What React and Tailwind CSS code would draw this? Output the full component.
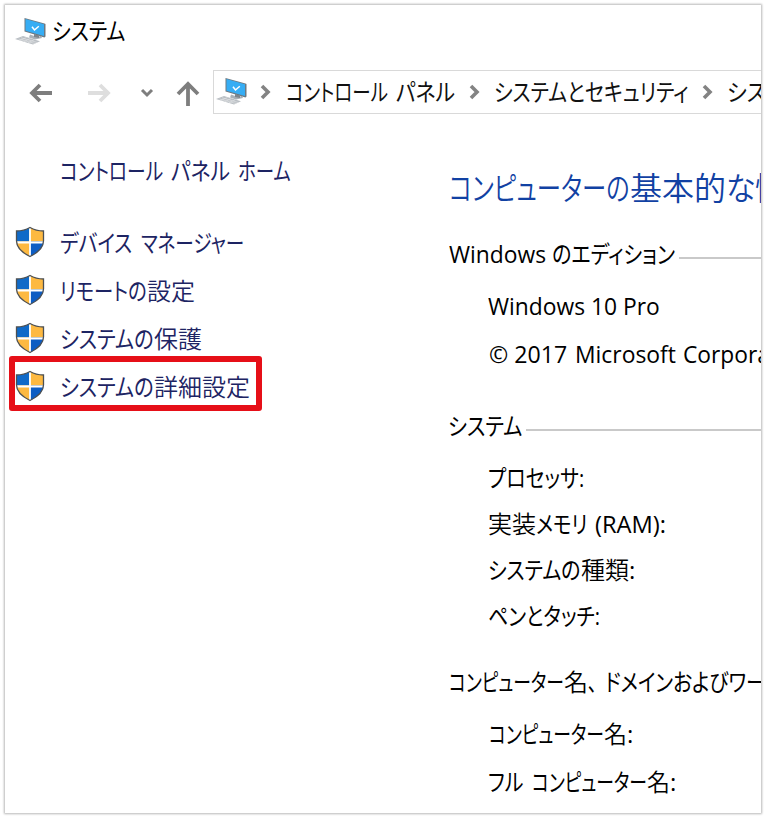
import { useLayoutEffect, useRef } from "react";

// A run of text squeezed or stretched to the width of its box
function Run({ className = "", children }) {
  const box = useRef(null);
  const text = useRef(null);

  useLayoutEffect(() => {
    const scale = box.current.offsetWidth / text.current.offsetWidth;
    text.current.style.transform = `scaleX(${scale})`;
  }, []);

  return (
    <span ref={box} className={`flex-none whitespace-nowrap ${className}`}>
      <span ref={text} className="inline-block origin-left">{children}</span>
    </span>
  );
}

function ComputerIcon() {
  return (
    <svg className="w-[31px] h-[28px] flex-none" viewBox="0 0 31 28">
      <path d="M15 17.5 L22 20 L26 19 L27 21 L20 22.5 L14 20.5 Z" fill="#a9b1b8" />
      <path d="M19 17 L24 18.5 V21 L19 20 Z" fill="#7d858c" />
      <path d="M9.5 1 L29.5 6.5 L30.5 7 V19.5 L29.5 20.5 L9.5 14.5 Z" fill="#6d7880" />
      <path d="M10.5 2 L29 7.2 V19 L10.5 13.7 Z" fill="#36adf4" />
      <path d="M17 9.7 L19.5 13 L23.8 9.3" fill="none" stroke="#fff" strokeWidth="1.5" />
      <path d="M0 22 L8 19 L25 24.3 L18 27.5 Z" fill="#b9bec3" />
      <path d="M3.5 22 L20 26.5 M6 20.8 L22 25.4 M5 23.5 L11.5 20.5 M9 24.7 L15 21.6 M13 25.8 L19 22.8" stroke="#e6e8ea" strokeWidth="0.6" />
    </svg>
  );
}

function Shield() {
  return (
    <svg className="w-[30px] h-[32px] flex-none" viewBox="0 0 30 32">
      <defs>
        <clipPath id="shield">
          <path d="M15 1.5 Q21 5 28.5 5 V15 C28.5 22.5 22 27 15 30.5 C8 27 1.5 22.5 1.5 15 V5 Q9 5 15 1.5 Z" />
        </clipPath>
      </defs>
      <g clipPath="url(#shield)">
        <path d="M0 0 H14.5 V15.5 H0 Z" fill="#106ac8" />
        <path d="M14.5 0 H30 V15.5 H14.5 Z" fill="#fdb941" />
        <path d="M0 15.5 H14.5 V32 H0 Z" fill="#fdb941" />
        <path d="M14.5 15.5 H30 V32 H14.5 Z" fill="#0d5dc3" />
        <path d="M15 0 V32 M0 16.5 H30" stroke="#fff" strokeWidth="1.8" />
      </g>
      <path d="M15 1.5 Q21 5 28.5 5 V15 C28.5 22.5 22 27 15 30.5 C8 27 1.5 22.5 1.5 15 V5 Q9 5 15 1.5 Z" fill="none" stroke="#4d5052" strokeWidth="1.3" />
    </svg>
  );
}

function Crumb() {
  return (
    <svg className="w-[11px] h-[16px] flex-none" viewBox="0 0 11 16" fill="none" stroke="#838383" strokeWidth="3.6">
      <path d="M2 2 L8 8 L2 14" />
    </svg>
  );
}

function TaskLink({ className = "", children }) {
  return (
    <a className={`flex h-12 items-center ${className}`}>
      <Shield />
      <span className="ml-[15px] flex pt-px">{children}</span>
    </a>
  );
}

export default function App() {
  return (
    <div className="h-[818px] w-[766px] overflow-hidden bg-white pt-[5px] pl-[5px] font-['Open_Sans','Noto_Sans_CJK_JP',sans-serif] text-[24px] leading-[32px] text-black [font-feature-settings:'palt']">
      <div className="h-[808px] w-[756px] overflow-hidden bg-white shadow-[0_0_2px_1px_rgba(0,0,0,0.28)]">
        {/* Title bar */}
        <div className="flex h-[51px] items-center pl-[10px]">
          <ComputerIcon />
          <Run className="ml-[6px] w-[73px]">システム</Run>
        </div>

        {/* Navigation */}
        <div className="mt-[14px] flex h-[44px] items-center">
          <svg className="ml-[23px] w-[26px] h-[24px] flex-none" viewBox="0 0 26 24" fill="none" stroke="#7e7e7e" strokeWidth="3.8">
            <path d="M24 13 H4 M12 5 L4 13 L12 21" />
          </svg>
          <svg className="ml-[32px] w-[26px] h-[24px] flex-none" viewBox="0 0 26 24" fill="none" stroke="#dedede" strokeWidth="3.8">
            <path d="M2 13 H22 M14 5 L22 13 L14 21" />
          </svg>
          <svg className="ml-[28px] w-[14px] h-[12px] flex-none" viewBox="0 0 14 12" fill="none" stroke="#7e7e7e" strokeWidth="3">
            <path d="M2 4 L7 9 L12 4" />
          </svg>
          <svg className="ml-[22px] w-[26px] h-[28px] flex-none" viewBox="0 0 26 28" fill="none" stroke="#7e7e7e" strokeWidth="3.8">
            <path d="M12 28 V6 M2 16 L12 6 L22 16" />
          </svg>
          <div className="ml-[11px] flex h-[44px] w-[600px] flex-none items-center border border-[#d9d9d9] pl-[3px] text-[#111]">
            <span className="-mt-[2px] -ml-px flex">
              <ComputerIcon />
            </span>
            <span className="w-[13px] flex-none" />
            <Crumb />
            <Run className="ml-[15px] w-[102px]">コントロール</Run>
            <Run className="ml-[8px] w-[59px]">パネル</Run>
            <span className="w-[14px] flex-none" />
            <Crumb />
            <Run className="ml-[14px] w-[195px]">システムとセキュリティ</Run>
            <span className="w-[13px] flex-none" />
            <Crumb />
            <Run className="ml-[14px] w-[39px]">シス</Run>
          </div>
        </div>

        <div className="flex">
          {/* Left pane */}
          <nav className="w-[443px] flex-none text-[#1d2463]">
            <a className="mt-[41px] ml-[55px] flex">
              <Run className="w-[103px]">コントロール</Run>
              <Run className="ml-[8px] w-[59px]">パネル</Run>
              <Run className="ml-[8px] w-[53px]">ホーム</Run>
            </a>
            <div className="mt-[31px] pl-[10px]">
              <TaskLink>
                <Run className="w-[72px]">デバイス</Run>
                <Run className="ml-[9px] w-[103px]">マネージャー</Run>
              </TaskLink>
              <TaskLink>
                <Run className="w-[87px]">リモートの</Run>
                <Run className="w-[48px] font-[350]">設定</Run>
              </TaskLink>
              <TaskLink>
                <Run className="w-[94px]">システムの</Run>
                <Run className="w-[48px] font-[350]">保護</Run>
              </TaskLink>
              <div className="-mt-[6px] -ml-[6px] h-[55px] w-[253px] rounded-[3px] border-[6px] border-[#e60f18]">
                <TaskLink>
                  <Run className="w-[94px]">システムの</Run>
                  <Run className="w-[96px] font-[350]">詳細設定</Run>
                </TaskLink>
              </div>
            </div>
          </nav>

          {/* System information */}
          <main className="w-[700px] flex-none">
            <h1 className="mt-[54px] flex text-[32px] leading-[40px] font-[350] text-[#1141a3]">
              <Run className="ml-px w-[181px]">コンピューターの</Run>
              <Run className="w-[96px]">基本的</Run>
              <Run className="w-[29px]">な</Run>
              <Run className="w-[32px]">情</Run>
            </h1>

            <h2 className="mt-[30px] flex">
              <Run className="ml-px w-[97px]">Windows</Run>
              <Run className="ml-[6px] w-[123px]">のエディション</Run>
              <span className="mt-[19px] ml-[4px] h-[2px] flex-1 bg-[#c9c9c9]" />
            </h2>
            <div className="ml-[40px] flex h-[48px] mt-[20px]">
              <Run className="w-[172px]">Windows 10 Pro</Run>
            </div>
            <div className="ml-[40px] flex h-[48px]">
              <Run className="ml-px w-[78px]">© 2017</Run>
              <Run className="ml-[8px] w-[101px]">Microsoft</Run>
              <Run className="ml-[7px] w-[128px]">Corporation</Run>
            </div>

            <h2 className="mt-[24px] flex">
              <Run className="w-[74px]">システム</Run>
              <span className="mt-[19px] ml-[4px] h-[2px] flex-1 bg-[#c9c9c9]" />
            </h2>
            <div className="mt-[20px] ml-[40px] flex h-[46px]">
              <Run className="w-[96px]">プロセッサ:</Run>
            </div>
            <div className="ml-[40px] flex h-[46px]">
              <Run className="w-[48px] font-[350]">実装</Run>
              <Run className="w-[51px]">メモリ</Run>
              <Run className="ml-[8px] w-[71px]">(RAM):</Run>
            </div>
            <div className="ml-[40px] flex h-[46px]">
              <Run className="w-[93px]">システムの</Run>
              <Run className="w-[48px] font-[350]">種類</Run>
              <Run className="w-[6px]">:</Run>
            </div>
            <div className="ml-[40px] flex h-[46px]">
              <Run className="w-[112px]">ペンとタッチ:</Run>
            </div>

            <h2 className="mt-[20px] flex">
              <Run className="ml-px w-[115px]">コンピューター</Run>
              <Run className="w-[24px] font-[350]">名</Run>
              <Run className="w-[9px]">、</Run>
              <Run className="ml-[8px] w-[161px]">ドメインおよびワー</Run>
            </h2>
            <div className="mt-[20px] ml-[41px] flex h-[48px]">
              <Run className="w-[115px]">コンピューター</Run>
              <Run className="w-[23px] font-[350]">名</Run>
              <Run className="w-[6px]">:</Run>
            </div>
            <div className="ml-[40px] flex">
              <Run className="w-[35px]">フル</Run>
              <Run className="ml-[9px] w-[115px]">コンピューター</Run>
              <Run className="w-[23px] font-[350]">名</Run>
              <Run className="w-[6px]">:</Run>
            </div>
          </main>
        </div>
      </div>
    </div>
  );
}
